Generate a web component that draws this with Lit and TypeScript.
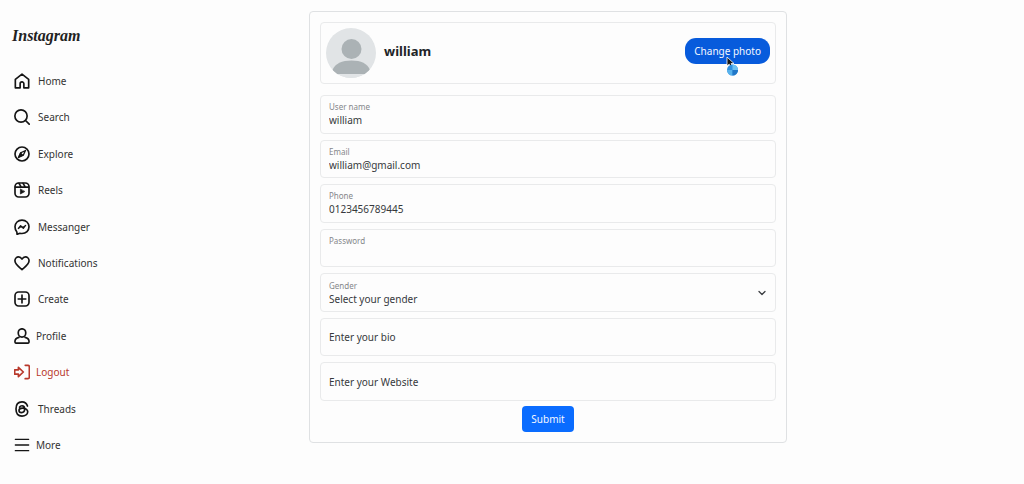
import { LitElement, html, css, svg, nothing, type SVGTemplateResult } from "lit";
import { customElement, property } from "lit/decorators.js";
import { classMap } from "lit/directives/class-map.js";

interface NavItem {
  label: string;
  icon: SVGTemplateResult;
  tight?: boolean;
  danger?: boolean;
}

const NAV: NavItem[] = [
  {
    label: "Home",
    icon: svg`<path d="M9.2 22.2H2V9.6L12 1.8l10 7.8v12.6h-7.2v-6a2.8 2.8 0 0 0-5.6 0z"/>`,
  },
  {
    label: "Search",
    icon: svg`<circle cx="10.5" cy="10.5" r="9.2"/><path d="M17.3 17.3l5.5 5.5"/>`,
  },
  {
    label: "Explore",
    icon: svg`<circle cx="12" cy="12" r="10.5"/><path d="M17.2 6.8l-3.3 7.1-7.1 3.3 3.3-7.1z" stroke-width="2"/><path d="M10.1 10.1l3.8 3.8-7.1 3.3z" fill="currentColor" stroke-width="1"/>`,
  },
  {
    label: "Reels",
    icon: svg`<rect x="1.5" y="1.5" width="21" height="21" rx="5.5"/><path d="M2 7.6h20M7.5 2l3.2 5.4M13.6 2l3.2 5.4"/><path d="M9.6 11v7l6.2-3.5z" fill="currentColor" stroke-width="1"/>`,
  },
  {
    label: "Messanger",
    icon: svg`<path d="M12 1.6c6 0 10.5 4.3 10.5 10.1S18 21.8 12 21.8c-1.1 0-2.1-.1-3.1-.4L4.6 23l-.3-3.5C2.5 17.6 1.5 14.9 1.5 11.7 1.5 5.9 6 1.6 12 1.6z"/><path d="M6.5 14.2l3.4-4.2 3.5 2.8 4-3.2-3.4 4.3-3.5-2.8z" stroke-width="1.9" fill="currentColor"/>`,
  },
  {
    label: "Notifications",
    icon: svg`<path d="M12 21.8C8.5 18.7 1.4 14.2 1.4 8.7 1.4 5.4 3.9 2.9 6.9 2.9c2.3 0 3.9 1.3 5.1 3.3 1.2-2 2.8-3.3 5.1-3.3 3 0 5.5 2.5 5.5 5.8 0 5.5-7.1 10-10.6 13.1z"/>`,
  },
  {
    label: "Create",
    icon: svg`<rect x="1.5" y="1.5" width="21" height="21" rx="5.5"/><path d="M12 6.3v11.4M6.3 12h11.4"/>`,
  },
  {
    label: "Profile",
    tight: true,
    icon: svg`<rect x="6.4" y="1.2" width="11.2" height="12.4" rx="5.6"/><path d="M7.4 14C3.600 14.800 1.400 17.400 1.400 20.600c0 1.400.8 2.200 2 2.200h17.200c1.200 0 2-.8 2-2.200 0-3.200-2.200-5.800-6-6.600"/>`,
  },
  {
    label: "Logout",
    tight: true,
    danger: true,
    icon: svg`<path d="M1 8.800h5.600V5L14 12l-7.400 7v-3.800H1z"/><path d="M16.800 2H21a2 2 0 0 1 2 2v16a2 2 0 0 1-2 2h-4.200"/>`,
  },
  {
    label: "Threads",
    icon: svg`<path d="M20.200 7.600C19 3.500 16.200 1.400 12 1.400c-6 0-9 4-9 10.600s3 10.600 9 10.600c4.700 0 8.600-2.700 8.600-6.300 0-3.700-3.600-5.500-7.900-5.500-3.300 0-5.200 1.400-5.200 3.500 0 1.900 1.600 3.100 3.800 3.100 2.900 0 4.700-1.900 4.700-5.300 0-3.300-1.500-5-4-5-1.700 0-2.900.7-3.700 2"/>`,
  },
  {
    label: "More",
    tight: true,
    icon: svg`<path d="M2 3.500h20M2 12h20M2 20.500h20" stroke-width="2"/>`,
  },
];

@customElement("side-nav")
export class SideNav extends LitElement {
  static styles = css`
    :host {
      display: block;
    }
    .nav {
      box-sizing: border-box;
      display: flex;
      flex-direction: column;
      gap: 23px;
      min-height: 100vh;
      padding: 24px 12px 28px;
    }
    .logo {
      align-self: flex-start;
      color: #222;
      font: italic bold 16px/24px "Liberation Serif", serif;
      text-decoration: none;
    }
    .list {
      display: flex;
      flex: 1;
      flex-direction: column;
      justify-content: space-between;
      list-style: none;
      margin: 0;
      padding: 0 2px;
    }
    .link {
      align-items: center;
      color: #333;
      display: inline-flex;
      gap: 8px;
      line-height: 20px;
      text-decoration: none;
    }
    .tight {
      gap: 6px;
    }
    .icon {
      color: #151515;
      fill: none;
      height: 16px;
      stroke: currentColor;
      stroke-linecap: round;
      stroke-linejoin: round;
      stroke-width: 2.5;
      width: 16px;
    }
    .danger,
    .danger .icon {
      color: #b8382b;
    }
  `;

  render() {
    return html`
      <nav class="nav" aria-label="Main">
        <a class="logo" href="#">Instagram</a>
        <ul class="list">
          ${NAV.map(
            (item) => html`<li>
              <a
                href="#"
                class=${classMap({ link: true, tight: !!item.tight, danger: !!item.danger })}
              >
                <svg class="icon" viewBox="0 0 24 24" aria-hidden="true">${item.icon}</svg>
                ${item.label}
              </a>
            </li>`
          )}
        </ul>
      </nav>
    `;
  }
}

@customElement("text-field")
export class TextField extends LitElement {
  @property() label = "";
  @property() type = "text";
  @property() value = "";
  @property() placeholder = "";
  @property({ type: Array }) options: string[] = [];

  static styles = css`
    :host {
      display: grid;
    }
    .box {
      border: 1px solid #e9eaeb;
      border-radius: 4px;
      box-sizing: border-box;
      display: flex;
      flex-direction: column;
      justify-content: center;
      min-height: 38px;
      padding: 0 8px;
      position: relative;
    }
    .caption {
      color: #85878a;
      font-size: 8px;
      line-height: 12px;
    }
    .control {
      appearance: none;
      background: none;
      border: 0;
      color: #36393c;
      font: inherit;
      height: 14px;
      line-height: 14px;
      margin: 0;
      outline: 0;
      padding: 0;
      width: 100%;
    }
    .control::placeholder {
      color: #36393c;
      opacity: 1;
    }
    .chevron {
      fill: none;
      height: 8px;
      pointer-events: none;
      position: absolute;
      right: 9px;
      stroke: #3a3d40;
      stroke-linecap: round;
      stroke-linejoin: round;
      stroke-width: 2.5;
      top: calc(50% - 4px);
      width: 8px;
    }
  `;

  render() {
    const isSelect = this.options.length > 0;
    return html`
      <div class="box">
        ${this.label
          ? html`<label class="caption" for="control">${this.label}</label>`
          : nothing}
        ${isSelect
          ? html`<select class="control" id="control">
                ${this.options.map((o) => html`<option>${o}</option>`)}
              </select>
              <svg class="chevron" viewBox="0 0 16 16" aria-hidden="true">
                <path d="M2 5l6 6 6-6" />
              </svg>`
          : html`<input
              class="control"
              id="control"
              type=${this.type}
              .value=${this.value}
              placeholder=${this.placeholder}
              aria-label=${this.label || this.placeholder}
            />`}
      </div>
    `;
  }
}

@customElement("app-root")
export class AppRoot extends LitElement {
  static styles = css`
    :host {
      background: #fdfdfd;
      color: #36393c;
      display: grid;
      font-family: "Noto Sans", "Open Sans", sans-serif;
      font-size: 10px;
      grid-template-columns: minmax(120px, 309fr) minmax(0, 478fr) 237fr;
      min-height: 100vh;
    }
    .card {
      border: 1px solid #dfe1e3;
      border-radius: 4px;
      box-sizing: border-box;
      display: flex;
      flex-direction: column;
      margin: 11px 0 41px;
      padding: 10px;
    }
    .profile {
      align-items: center;
      border: 1px solid #e9eaeb;
      border-radius: 4px;
      display: flex;
      gap: 8px;
      margin-bottom: 11px;
      padding: 5px;
    }
    .avatar {
      border-radius: 50%;
      height: 50px;
      width: 50px;
    }
    .identity {
      align-items: center;
      display: flex;
      flex: 1;
      justify-content: space-between;
      padding-bottom: 4px;
    }
    .name {
      color: #212427;
      font-size: 13px;
      line-height: 20px;
      margin: 0;
    }
    .button {
      background: #0a6cff;
      border: 0;
      border-radius: 4px;
      color: #f4f8ff;
      font: inherit;
      height: 26px;
      line-height: 16px;
      padding: 0 9px;
    }
    .change {
      background: #075bdc;
      border-radius: 11px;
    }
    .action {
      position: relative;
    }
    .pointer {
      height: 20px;
      left: 41px;
      pointer-events: none;
      position: absolute;
      top: 18px;
      width: 13px;
    }
    .fields {
      display: grid;
      flex: 1;
      gap: 6px;
      grid-auto-rows: 1fr;
      margin-bottom: 5px;
    }
    .submit {
      align-self: center;
    }
  `;

  render() {
    return html`
      <side-nav></side-nav>
      <form class="card" @submit=${(e: Event) => e.preventDefault()}>
        <header class="profile">
          <svg class="avatar" viewBox="0 0 50 50" role="img" aria-label="Profile photo">
            <rect width="50" height="50" fill="#e1e4e6" />
            <circle cx="25.5" cy="21" r="10" fill="#abb2b5" />
            <path d="M6.500 42C9 35.500 16 32.500 25.500 32.500S41.500 35.500 44 42l-3 4H9z" fill="#abb2b5" />
            <path d="M0 46h50v4H0z" fill="#e1e4e6" />
          </svg>
          <div class="identity">
            <h1 class="name">william</h1>
            <div class="action">
              <button class="button change" type="button">Change photo</button>
              <svg class="pointer" viewBox="0 0 13 20" aria-hidden="true">
                <path d="M1 1v9l2.200-1.800 1.300 2.600 1.800-.8-1.200-2.500H8z" fill="#151515" stroke="#fff" stroke-width=".8" />
                <circle cx="6.500" cy="14" r="5.500" fill="#2f8fe0" />
                <path d="M6.500 14V8.500a5.500 5.500 0 0 1 5.500 5.500z" fill="#6cc0f0" />
                <path d="M6.500 14v5.500A5.500 5.500 0 0 1 1 14z" fill="#58b2ec" />
                <path d="M6.500 14H12a5.500 5.500 0 0 1-5.500 5.500z" fill="#2278c8" />
              </svg>
            </div>
          </div>
        </header>
        <div class="fields">
          <text-field label="User name" value="william"></text-field>
          <text-field label="Email" type="email" value="william@gmail.com"></text-field>
          <text-field label="Phone" type="tel" value="0123456789445"></text-field>
          <text-field label="Password" type="password"></text-field>
          <text-field
            label="Gender"
            .options=${["Select your gender", "Male", "Female"]}
          ></text-field>
          <text-field placeholder="Enter your bio"></text-field>
          <text-field placeholder="Enter your Website"></text-field>
        </div>
        <button class="button submit" type="submit">Submit</button>
      </form>
    `;
  }
}
